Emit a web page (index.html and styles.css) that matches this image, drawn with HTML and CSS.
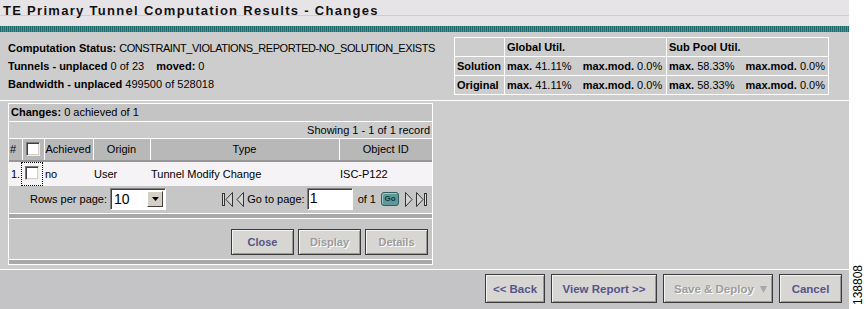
FILE: index.html
```html
<!DOCTYPE html>
<html lang="en">
<head>
    <meta charset="UTF-8">
    <title>TE Primary Tunnel Computation Results - Changes</title>
    <link rel="stylesheet" href="styles.css">
</head>
<body>
    <div class="page">
        <div class="app">
            <div class="titlebar">
                <h1>TE Primary Tunnel Computation Results - Changes</h1>
            </div>
            <div class="stripe"></div>

            <div class="summary">
                <div class="status">
                    <p><b>Computation Status:</b> <span class="caps">CONSTRAINT_VIOLATIONS_REPORTED-NO_SOLUTION_EXISTS</span></p>
                    <p><b>Tunnels - unplaced</b> 0 of 23 <b class="moved">moved:</b> 0</p>
                    <p><b>Bandwidth - unplaced</b> 499500 of 528018</p>
                </div>
                <table class="util">
                    <tr>
                        <th></th>
                        <th>Global Util.</th>
                        <th>Sub Pool Util.</th>
                    </tr>
                    <tr>
                        <th>Solution</th>
                        <td><b>max.</b> 41.11% <b class="mod">max.mod.</b> 0.0%</td>
                        <td><b>max.</b> 58.33% <b class="mod">max.mod.</b> 0.0%</td>
                    </tr>
                    <tr>
                        <th>Original</th>
                        <td><b>max.</b> 41.11% <b class="mod">max.mod.</b> 0.0%</td>
                        <td><b>max.</b> 58.33% <b class="mod">max.mod.</b> 0.0%</td>
                    </tr>
                </table>
            </div>

            <div class="work">
                <div class="panel">
                    <div class="panel-title"><b>Changes:</b> 0 achieved of 1</div>
                    <div class="panel-count">Showing 1 - 1 of 1 record</div>
                    <table class="changes">
                        <colgroup>
                            <col class="c-num">
                            <col class="c-cb">
                            <col class="c-ach">
                            <col class="c-origin">
                            <col class="c-type">
                            <col class="c-obj">
                        </colgroup>
                        <thead>
                            <tr>
                                <th class="left">#</th>
                                <th><span class="checkbox"></span></th>
                                <th class="left">Achieved</th>
                                <th>Origin</th>
                                <th>Type</th>
                                <th>Object ID</th>
                            </tr>
                        </thead>
                        <tbody>
                            <tr>
                                <td>1.</td>
                                <td><span class="focus"><span class="checkbox"></span></span></td>
                                <td>no</td>
                                <td>User</td>
                                <td>Tunnel Modify Change</td>
                                <td>ISC-P122</td>
                            </tr>
                        </tbody>
                    </table>

                    <div class="pager">
                        <div class="rows">
                            Rows per page:
                            <span class="select">
                                <span class="select-value">10</span>
                                <span class="select-arrow">
                                    <svg width="7" height="4" viewBox="0 0 7 4"><polygon points="0,0 7,0 3.5,4" fill="#000"/></svg>
                                </span>
                            </span>
                        </div>
                        <div class="nav">
                            <svg class="nav-icon" width="13" height="17" viewBox="0 0 13 17">
                                <rect x="1.5" y="2.5" width="2" height="12" fill="#dcdcdc" stroke="#333"/>
                                <polygon points="11.5,1.5 5,8.5 11.5,15.5" fill="#d4d4d4" stroke="#333"/>
                            </svg>
                            <svg class="nav-icon" width="9" height="17" viewBox="0 0 9 17">
                                <polygon points="7.5,1.5 1,8.5 7.5,15.5" fill="#d4d4d4" stroke="#333"/>
                            </svg>
                            <span>Go to page:</span>
                            <span class="page-input">1</span>
                            <span>of 1</span>
                            <span class="go">Go</span>
                            <svg class="nav-icon" width="9" height="17" viewBox="0 0 9 17">
                                <polygon points="1.5,1.5 8,8.5 1.5,15.5" fill="#d4d4d4" stroke="#333"/>
                            </svg>
                            <svg class="nav-icon" width="13" height="17" viewBox="0 0 13 17">
                                <polygon points="1.5,1.5 8,8.5 1.5,15.5" fill="#d4d4d4" stroke="#333"/>
                                <rect x="9.5" y="2.5" width="2" height="12" fill="#dcdcdc" stroke="#333"/>
                            </svg>
                        </div>
                    </div>

                    <div class="sep"></div>
                    <div class="panel-buttons">
                        <button class="btn">Close</button>
                        <button class="btn" disabled>Display</button>
                        <button class="btn" disabled>Details</button>
                    </div>
                    <div class="sep"></div>
                </div>
            </div>

            <div class="footer">
                <button class="btn big back">&lt;&lt; Back</button>
                <button class="btn big report">View Report &gt;&gt;</button>
                <button class="btn big split" disabled>
                    <span>Save &amp; Deploy</span>
                    <svg class="split-arrow" width="7" height="10" viewBox="0 0 7 10"><polygon points="0,2 7,2 3.5,9" fill="#a8a8a8"/></svg>
                </button>
                <button class="btn big cancel">Cancel</button>
            </div>
        </div>
        <div class="side"><span class="fig">138808</span></div>
    </div>
</body>
</html>
```

FILE: styles.css
```css
* {
    margin: 0;
    padding: 0;
    box-sizing: border-box;
}

body {
    background: #fff;
    font-family: 'Liberation Sans', Arial, sans-serif;
    font-size: 11px;
    color: #000;
}

.page {
    display: flex;
    width: 866px;
    height: 309px;
    overflow: hidden;
}

.app {
    width: 849px;
    display: flex;
    flex-direction: column;
    background: #cdcdcd;
}

/* title */
.titlebar {
    height: 26px;
    background: #e7e4e7;
}

.titlebar::after {
    content: '';
    display: block;
    height: 1px;
    background: #d6cdc2;
    margin-top: -6px;
}

h1 {
    height: 21px;
    padding: 3px 0 0 3px;
    font-size: 13px;
    font-weight: bold;
    letter-spacing: 1.3px;
    color: #111;
    line-height: 15px;
}

.stripe {
    height: 6px;
    background: repeating-linear-gradient(90deg, #1d6b6b 0, #1d6b6b 1px, #3f9b99 1px, #3f9b99 2px);
}

/* summary */
.summary {
    height: 69px;
    display: flex;
    justify-content: space-between;
    border-bottom: 1px solid #fff;
    padding: 0 20px 0 8px;
}

.status {
    padding-top: 7px;
}

.status p {
    line-height: 18px;
    white-space: nowrap;
}

.caps {
    letter-spacing: -0.45px;
}

.moved {
    margin-left: 9px;
}

.util {
    margin-top: 5px;
    height: 58px;
    border-collapse: collapse;
    border: 1px solid #fff;
    align-self: flex-start;
}

.util th,
.util td {
    border: 1px solid #fff;
    text-align: left;
    padding: 0 2px 0 2px;
    white-space: nowrap;
    height: 19px;
}

.util th:first-child {
    width: 50px;
}

.util td {
    width: 162px;
}

.util .mod {
    margin-left: 8px;
}

/* changes panel */
.work {
    height: 168px;
    padding: 2px 0 0 8px;
}

.panel {
    width: 425px;
    border: 1px solid #fff;
    border-bottom: 0;
    background: #c6c6c6;
}

.panel-title {
    height: 18px;
    line-height: 17px;
    padding-left: 2px;
    background: #c4c4c4;
    border-bottom: 1px solid #fff;
}

.panel-count {
    height: 16px;
    line-height: 16px;
    text-align: right;
    padding-right: 2px;
    background: #cbcbcb;
}

.changes {
    width: 423px;
    table-layout: fixed;
    border-collapse: collapse;
}

.c-num { width: 13px; }
.c-cb { width: 22px; }
.c-ach { width: 49px; }
.c-origin { width: 57px; }
.c-type { width: 189px; }
.c-obj { width: 93px; }

.changes th {
    height: 22px;
    font-weight: normal;
    background: #b8b8b8;
    border-top: 1px solid #fff;
    border-left: 1px solid #fff;
    border-bottom: 2px solid #969696;
    text-align: center;
    white-space: nowrap;
}

.changes th:first-child {
    border-left: 0;
}

.changes th.left {
    text-align: left;
    padding-left: 1px;
}

.changes td {
    height: 25px;
    background: #f5f3f5;
    padding-left: 1px;
    white-space: nowrap;
}

.changes td:first-child {
    padding-left: 2px;
}

.checkbox {
    display: inline-block;
    width: 14px;
    height: 14px;
    background: #fff;
    border-top: 1px solid #7a7a7a;
    border-left: 1px solid #7a7a7a;
    border-bottom: 1px solid #eee;
    border-right: 1px solid #eee;
    box-shadow: inset 1px 1px 0 #404040, inset -1px -1px 0 #d4d0c8;
    vertical-align: middle;
}

.focus {
    display: inline-block;
    border: 1px dotted #000;
    padding: 3px 3px 5px 3px;
    margin-left: -2px;
}

/* pager */
.pager {
    height: 27px;
    display: flex;
    align-items: center;
    justify-content: space-between;
    padding: 0 4px 0 21px;
    background: #c6c6c6;
}

.rows {
    display: flex;
    align-items: center;
    gap: 3px;
}

.select {
    display: flex;
    width: 56px;
    height: 22px;
    background: #fff;
    border-top: 1px solid #808080;
    border-left: 1px solid #808080;
    border-bottom: 1px solid #fff;
    border-right: 1px solid #fff;
    box-shadow: inset 1px 1px 0 #404040;
    padding: 2px 2px 2px 3px;
}

.select-value {
    flex: 1;
    font-size: 14px;
    line-height: 16px;
}

.select-arrow {
    width: 16px;
    display: flex;
    align-items: center;
    justify-content: center;
    background: #d4d0c8;
    border-top: 1px solid #fff;
    border-left: 1px solid #fff;
    border-bottom: 1px solid #404040;
    border-right: 1px solid #404040;
}

.nav {
    display: flex;
    align-items: center;
    gap: 2px;
}

.nav-icon {
    display: block;
}

.page-input {
    width: 46px;
    height: 22px;
    background: #fff;
    border-top: 1px solid #808080;
    border-left: 1px solid #808080;
    border-bottom: 1px solid #fff;
    border-right: 1px solid #fff;
    box-shadow: inset 1px 1px 0 #404040;
    font-size: 14px;
    line-height: 18px;
    padding-left: 2px;
    margin-right: 3px;
}

.go {
    width: 18px;
    height: 14px;
    margin: 0 3px;
    border: 1px solid #2f5e5e;
    border-radius: 3px;
    background: #5d9a98;
    color: #123838;
    font-size: 8px;
    font-weight: bold;
    line-height: 12px;
    text-align: center;
    box-shadow: inset 1px 1px 0 #9cc8c6;
}

.sep {
    height: 6px;
    border-top: 1px solid #fff;
    border-bottom: 1px solid #fff;
    background: #a8a7a9;
}

.panel-buttons {
    height: 40px;
    display: flex;
    justify-content: flex-end;
    align-items: flex-start;
    gap: 4px;
    padding: 10px 4px 0 0;
    background: #c6c6c6;
}

/* buttons */
.btn {
    height: 26px;
    min-width: 63px;
    padding: 0 6px;
    font-family: 'Liberation Sans', Arial, sans-serif;
    font-size: 11px;
    font-weight: bold;
    color: #55558a;
    background: #d8d6d3;
    border: 1px solid #3a3a3a;
    box-shadow: inset 1px 1px 0 #f4f4f4, inset -1px -1px 0 #9a9a9a;
    white-space: nowrap;
}

.btn:disabled {
    color: #9c9c9c;
    text-shadow: 1px 1px 0 #fff;
}

.footer {
    flex: 1;
    display: flex;
    justify-content: flex-end;
    align-items: flex-start;
    gap: 6px;
    padding: 4px 7px 0 0;
    background: #c4c3c5;
    border-top: 1px solid #fff;
}

.btn.big {
    height: 29px;
    font-size: 11.5px;
}

.btn.back {
    width: 60px;
    min-width: 0;
}

.btn.report {
    width: 106px;
}

.btn.split {
    width: 110px;
    display: flex;
    align-items: center;
    justify-content: space-between;
    padding: 0 5px 0 10px;
}

.btn.cancel {
    width: 61px;
}

.split-arrow {
    display: block;
}

/* figure number */
.side {
    flex: 1;
    display: flex;
    align-items: flex-end;
    justify-content: center;
    padding-bottom: 4px;
}

.fig {
    writing-mode: vertical-rl;
    transform: rotate(180deg);
    font-size: 12px;
    color: #000;
}
```
